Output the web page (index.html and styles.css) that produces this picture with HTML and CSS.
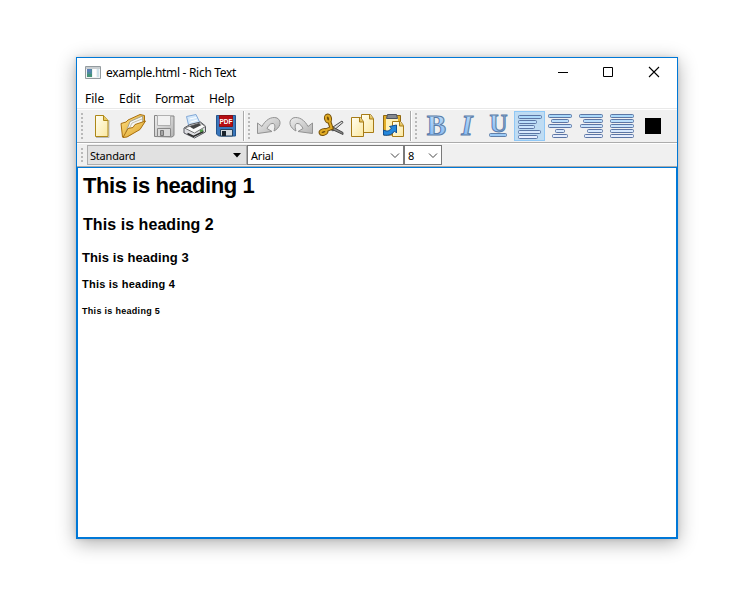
FILE: index.html
```html
<!DOCTYPE html>
<html lang="en">
<head>
<meta charset="utf-8">
<title>example.html - Rich Text</title>
<link rel="stylesheet" href="styles.css">
</head>
<body>
<svg class="defs" width="0" height="0" aria-hidden="true">
  <defs>
    <linearGradient id="paper" x1="0" y1="0" x2="1" y2="1"><stop offset="0" stop-color="#fffef2"/><stop offset="1" stop-color="#fbe8a0"/></linearGradient>
    <linearGradient id="gold" x1="0" y1="0" x2="1" y2="1"><stop offset="0" stop-color="#ffe48a"/><stop offset="1" stop-color="#d8981c"/></linearGradient>
    <linearGradient id="gray" x1="0" y1="0" x2="1" y2="1"><stop offset="0" stop-color="#eeeeee"/><stop offset="1" stop-color="#b4b4b4"/></linearGradient>
    <linearGradient id="blue" x1="0" y1="0" x2="0" y2="1"><stop offset="0" stop-color="#c4e2fb"/><stop offset="1" stop-color="#7eb5f3"/></linearGradient>
    <linearGradient id="bars" gradientUnits="userSpaceOnUse" x1="0" y1="3" x2="0" y2="28"><stop offset="0" stop-color="#a5d7fa"/><stop offset="1" stop-color="#eef0ff"/></linearGradient>
  </defs>
</svg>
<main class="window">
  <header class="titlebar">
    <svg class="app-icon" width="16" height="14" viewBox="0 0 16 14"><path d="M.5.5h15v12H.5z" fill="#f1f3f4" stroke="#949b9f"/><path d="M1 1h14v2H1z" fill="#c9ced1"/><path d="M2 3h5v8H2z" fill="#4d8c9c"/><path d="M2 3h4v3H2z" fill="#5a7fb5"/><path d="M2 8h5v3H2z" fill="#469379"/><path d="M8 3h3v8H8z" fill="#fff"/><path d="M12 3h2v8h-2z" fill="#cfe2ea"/></svg>
    <h1 class="title">example.html - Rich Text</h1>
    <div class="controls">
      <svg width="46" height="29" viewBox="0 0 46 29"><path d="M18 14.500h10" stroke="#000"/></svg>
      <svg width="45" height="29" viewBox="0 0 45 29"><path d="M17.500 9.500h9v9h-9z" fill="none" stroke="#000"/></svg>
      <svg width="46" height="29" viewBox="0 0 46 29"><path d="M18 9l10 10M28 9l-10 10" stroke="#000" stroke-width="1.100"/></svg>
    </div>
  </header>
  <nav class="menubar"><span class="m-file">File</span><span class="m-edit">Edit</span><span class="m-format">Format</span><span class="m-help">Help</span></nav>
  <div class="toolbar">
    <section class="group">
      <i class="grip"></i>
      <svg class="tool" viewBox="0 0 31 30"><path d="M9 26.500h13V9" fill="none" stroke="#b9b9b9"/><path d="M8.500 4.500h8l4.500 5v16H8.500z" fill="url(#paper)" stroke="#ad8716"/><path d="M16.500 4.500v5H21" fill="#e7c963" stroke="#ad8716"/></svg>
      <svg class="tool" viewBox="0 0 31 30"><path d="M4.500 26L3 12.500 8 11l2-2 12-5.500 4.500 1v7l-15 13z" fill="url(#gold)" stroke="#a9700f"/><path d="M8 21l4-10.500L24.500 5l.5 8z" fill="#f6f6f3" stroke="#a6a28d"/><path d="M10 20l4-8 10-4" fill="none" stroke="#c1bfae"/><path d="M5 26.500L10 17.500l5-1 2-3L27.500 10 22 18.500 9 26z" fill="url(#gold)" stroke="#a9700f"/></svg>
      <svg class="tool" viewBox="0 0 31 30"><path d="M5.500 4.500L25 5v19.500L23 26l-17.500-.5z" fill="url(#gray)" stroke="#858585"/><path d="M8.500 4.500h13v10h-13z" fill="#f1f1f1" stroke="#b0b0b0"/><path d="M8.500 17.500h13v8h-13z" fill="#dadada" stroke="#888"/><path d="M11.500 19.500h3v5h-3z" fill="#a5a5a5" stroke="#777"/></svg>
      <svg class="tool" viewBox="0 0 31 30"><path d="M9 16L6.500 5.500l9.500-2L21 14z" fill="#d3e8fb" stroke="#82a8d6"/><path d="M9.500 8l7-1.500M10.500 11l7-2" stroke="#fff"/><path d="M4 17l6-3.500L20.500 11l5 4v6L14.500 27 4 22z" fill="#dedee2" stroke="#55575e"/><path d="M4.500 17l10 5 11-6.500-5-3.500-10 3z" fill="#fafafa" stroke="#777"/><path d="M9.500 15.500l9-3 3 1.500-8 4z" fill="#444"/><path d="M7.500 22.500l6 3 10-5" fill="none" stroke="#292929" stroke-width="1.500"/><path d="M20 20.500l3-1.500" stroke="#4c9a44" stroke-width="2"/></svg>
      <svg class="tool" viewBox="0 0 31 30"><path d="M5.500 4.500h19V25h-17l-2-2z" fill="#3977bd" stroke="#25558c"/><path d="M8.500 4.500h13v11h-13z" fill="#b70d13" stroke="#871013"/><path d="M9.500 18.500h12V25h-12z" fill="#d5dadd" stroke="#25435f"/><path d="M11 20h4v5h-4z" fill="#1a232b"/><text x="15" y="12.500" class="pdf-label">PDF</text></svg>
    </section>
    <section class="group group-split">
      <i class="grip"></i>
      <svg class="tool" viewBox="0 0 31 30"><path d="M3.500 12L8 15.500C11 9.500 17 5 23 7c5.500 3 3 10-3 13 1.500-5 1-8-2-7.500-2 0-4 3-5 5l5 3-14.500 2z" fill="url(#gray)" stroke="#929292"/></svg>
      <svg class="tool" viewBox="0 0 31 30"><path d="M27.500 12L23 15.500C20 9.500 14 5 8 7c-5.500 3-3 10 3 13-1.500-5-1-8 2-7.500 2 0 4 3 5 5l-5 3 14.500 2z" fill="url(#gray)" stroke="#929292"/></svg>
      <svg class="tool" viewBox="0 0 31 30"><path d="M14 18l12-8 1 1.500-10 8.500z" fill="#ddd" stroke="#4b4b4b"/><path d="M15 15l12 6.500v2L15 18z" fill="#888" stroke="#4b4b4b"/><g fill="none" stroke="#755008" stroke-width="4" stroke-linecap="round"><ellipse cx="12" cy="7.500" rx="2" ry="3" transform="rotate(-15 12 7.500)"/><ellipse cx="7.500" cy="21" rx="3" ry="1.800" transform="rotate(-20 7.500 21)"/><path d="M13.500 11l2 6-5 2"/></g><g fill="none" stroke="#dfaa25" stroke-width="2" stroke-linecap="round"><ellipse cx="12" cy="7.500" rx="2" ry="3" transform="rotate(-15 12 7.500)"/><ellipse cx="7.500" cy="21" rx="3" ry="1.800" transform="rotate(-20 7.500 21)"/><path d="M13.500 11l2 6-5 2"/></g></svg>
      <svg class="tool" viewBox="0 0 31 30"><path d="M14.500 3.500h9l3 4v14h-12z" fill="url(#paper)" stroke="#a77b16"/><path d="M22.500 4v4h4" fill="#e6c35b" stroke="#a77b16"/><path d="M4.500 6.500h9l3 4v15h-12z" fill="url(#paper)" stroke="#a77b16"/><path d="M12.500 7v4h4" fill="#e6c35b" stroke="#a77b16"/></svg>
      <svg class="tool" viewBox="0 0 31 30"><path d="M5.500 4.500h17V24h-17z" fill="#e2ad27" stroke="#906710"/><path d="M8 7h12v15H8z" fill="#fff1b8"/><path d="M9.500 3.500h9l1 4h-11z" fill="#85898f" stroke="#4c5260"/><path d="M14.500 10.500h8l3 4v11h-11z" fill="url(#paper)" stroke="#a77b16"/><path d="M21.500 11v4h4" fill="#e6c35b" stroke="#a77b16"/><path d="M5.500 19v5c6 1 9-1 11-4l2 2v-8l-7 1.500 2 1.500c-2 3-4 4-8 2z" fill="#2588dc" stroke="#104d91"/></svg>
    </section>
    <section class="group group-split">
      <i class="grip"></i>
      <svg class="tool" viewBox="0 0 31 30"><text x="15.500" y="23.500" class="glyph glyph-b">B</text></svg>
      <svg class="tool" viewBox="0 0 31 30"><text x="15" y="23.500" class="glyph glyph-i">I</text></svg>
      <svg class="tool" viewBox="0 0 31 30"><text x="15.500" y="20.500" class="glyph glyph-u">U</text><rect x="6.500" y="22.500" width="17" height="3" rx="1" fill="#9bcaf6" stroke="#607fa9"/></svg>
      <svg class="tool active" viewBox="0 0 31 30"><g class="bars"><rect x="4.500" y="4.500" width="23" height="3" rx="1"/><rect x="4.500" y="9.500" width="18" height="3" rx="1"/><rect x="4.500" y="14.500" width="16" height="3" rx="1"/><rect x="4.500" y="19.500" width="22" height="3" rx="1"/><rect x="4.500" y="24.500" width="19" height="3" rx="1"/></g></svg>
      <svg class="tool" viewBox="0 0 31 30"><g class="bars"><rect x="3.500" y="3.500" width="23" height="3" rx="1"/><rect x="6.500" y="8.500" width="17" height="3" rx="1"/><rect x="3.500" y="13.500" width="23" height="3" rx="1"/><rect x="10.500" y="18.500" width="9" height="3" rx="1"/><rect x="7.500" y="23.500" width="15" height="3" rx="1"/></g></svg>
      <svg class="tool" viewBox="0 0 31 30"><g class="bars"><rect x="3.500" y="3.500" width="23" height="3" rx="1"/><rect x="7.500" y="8.500" width="19" height="3" rx="1"/><rect x="4.500" y="13.500" width="22" height="3" rx="1"/><rect x="11.500" y="18.500" width="15" height="3" rx="1"/><rect x="8.500" y="23.500" width="18" height="3" rx="1"/></g></svg>
      <svg class="tool" viewBox="0 0 31 30"><g class="bars"><rect x="3.500" y="3.500" width="23" height="3" rx="1"/><rect x="3.500" y="8.500" width="23" height="3" rx="1"/><rect x="3.500" y="13.500" width="23" height="3" rx="1"/><rect x="3.500" y="18.500" width="23" height="3" rx="1"/><rect x="3.500" y="23.500" width="23" height="3" rx="1"/></g></svg>
      <svg class="tool" viewBox="0 0 31 30"><path d="M7 7h16v16H7z"/></svg>
    </section>
  </div>
  <div class="formatbar">
    <i class="grip grip-short"></i>
    <div class="combo combo-style"><span>Standard</span><svg width="9" height="5" viewBox="0 0 9 5"><path d="M0 0h8L4 4.500z"/></svg></div>
    <div class="combo combo-font"><span>Arial</span><svg width="10" height="6" viewBox="0 0 10 6"><path d="M1 .5L5 4.500 9 .5" fill="none" stroke="#444"/></svg></div>
    <div class="combo combo-size"><span>8</span><svg width="10" height="6" viewBox="0 0 10 6"><path d="M1 .5L5 4.500 9 .5" fill="none" stroke="#444"/></svg></div>
  </div>
  <article class="editor">
    <h1>This is heading 1</h1>
    <h2>This is heading 2</h2>
    <h3>This is heading 3</h3>
    <h4>This is heading 4</h4>
    <h5>This is heading 5</h5>
  </article>
</main>
</body>
</html>
```
FILE: styles.css
```css
* { box-sizing: border-box; }
body { margin: 0; height: 600px; padding: 57px 0 0 76px; background: #fff; color: #000; font-family: "Noto Sans", sans-serif; font-size: 12px; }
svg { display: block; flex: none; }
.defs { position: absolute; }
.window { width: 602px; height: 482px; border: 1px solid #0078d7; background: #fff; display: flex; flex-direction: column; box-shadow: 0 4px 18px rgba(0,0,0,.32), 0 0 4px rgba(0,0,0,.12); }
.titlebar { height: 29px; display: flex; align-items: center; padding-left: 8px; flex: none; }
.title { margin: -1px 0 0 5px; font-size: 12px; font-weight: 400; letter-spacing: -.3px; white-space: nowrap; }
.controls { display: flex; margin-left: auto; }
.menubar { height: 21px; display: flex; line-height: 23px; padding-left: 8px; flex: none; }
.menubar span { white-space: nowrap; }
.m-file { width: 34px; }
.m-edit { width: 36px; }
.m-format { width: 54px; letter-spacing: -.3px; }
.m-help { width: 40px; letter-spacing: -.2px; }
.toolbar { height: 35px; border-top: 1px solid #e9e9e9; border-bottom: 1px solid #acacac; background: #f0f0f0; display: flex; flex: none; box-shadow: inset 0 1px #fff; padding-top: 2px; }
.group { display: flex; height: 30px; padding-left: 10px; position: relative; }
.group-split { margin-left: 1px; border-left: 1px solid #aaa; box-shadow: inset 1px 0 #fff; }
.grip { position: absolute; left: 4px; top: 2px; width: 2px; height: 27px; background: repeating-linear-gradient(#b9b9b9 0 2px, transparent 2px 4px); }
.tool { width: 31px; height: 30px; overflow: visible; }
.active { background: #bfdcf3; box-shadow: inset 0 0 0 1px #90c8f6; }
.bars { fill: url(#bars); stroke: #5c76a5; }
.pdf-label { font: 700 6.5px "Liberation Sans", sans-serif; fill: #fff; text-anchor: middle; }
.glyph { font-family: "Liberation Serif", serif; font-weight: 700; fill: url(#blue); stroke: #5a7ca9; stroke-width: 1px; text-anchor: middle; }
.glyph-b { font-size: 29px; }
.glyph-i { font-size: 29px; font-style: italic; }
.glyph-u { font-size: 25px; }
.formatbar { height: 24px; display: flex; background: #f0f0f0; border-top: 1px solid #fff; border-bottom: 1px solid #acacac; position: relative; padding: 1px 0 1px 10px; flex: none; }
.grip-short { top: 4px; height: 16px; }
.combo { height: 20px; border: 1px solid #7a7a7a; background: #fff; display: flex; align-items: center; justify-content: space-between; padding: 1px 3px 0 3px; font-size: 11px; line-height: 17px; letter-spacing: -.2px; }
.combo-style { width: 160px; background: #e1e1e1; border-color: #adadad; padding: 1px 4px 0 2px; }
.combo-font { width: 157px; }
.combo-size { width: 38px; }
.editor { flex: 1; border: 1px solid #0078d7; padding: 0 4px; font-family: "Liberation Sans", sans-serif; }
.editor > * { margin: 0; font-weight: 700; white-space: nowrap; }
.editor h1 { font-size: 22px; line-height: 36px; padding-left: 1px; letter-spacing: -.42px; }
.editor h2 { font-size: 16px; line-height: 24px; margin-top: 9px; padding-left: 1px; letter-spacing: .06px; }
.editor h3 { font-size: 13px; line-height: 20px; margin-top: 11px; letter-spacing: .08px; }
.editor h4 { font-size: 11px; line-height: 16px; margin-top: 8px; letter-spacing: .23px; }
.editor h5 { font-size: 9px; line-height: 14px; margin-top: 12px; letter-spacing: .3px; }
```
